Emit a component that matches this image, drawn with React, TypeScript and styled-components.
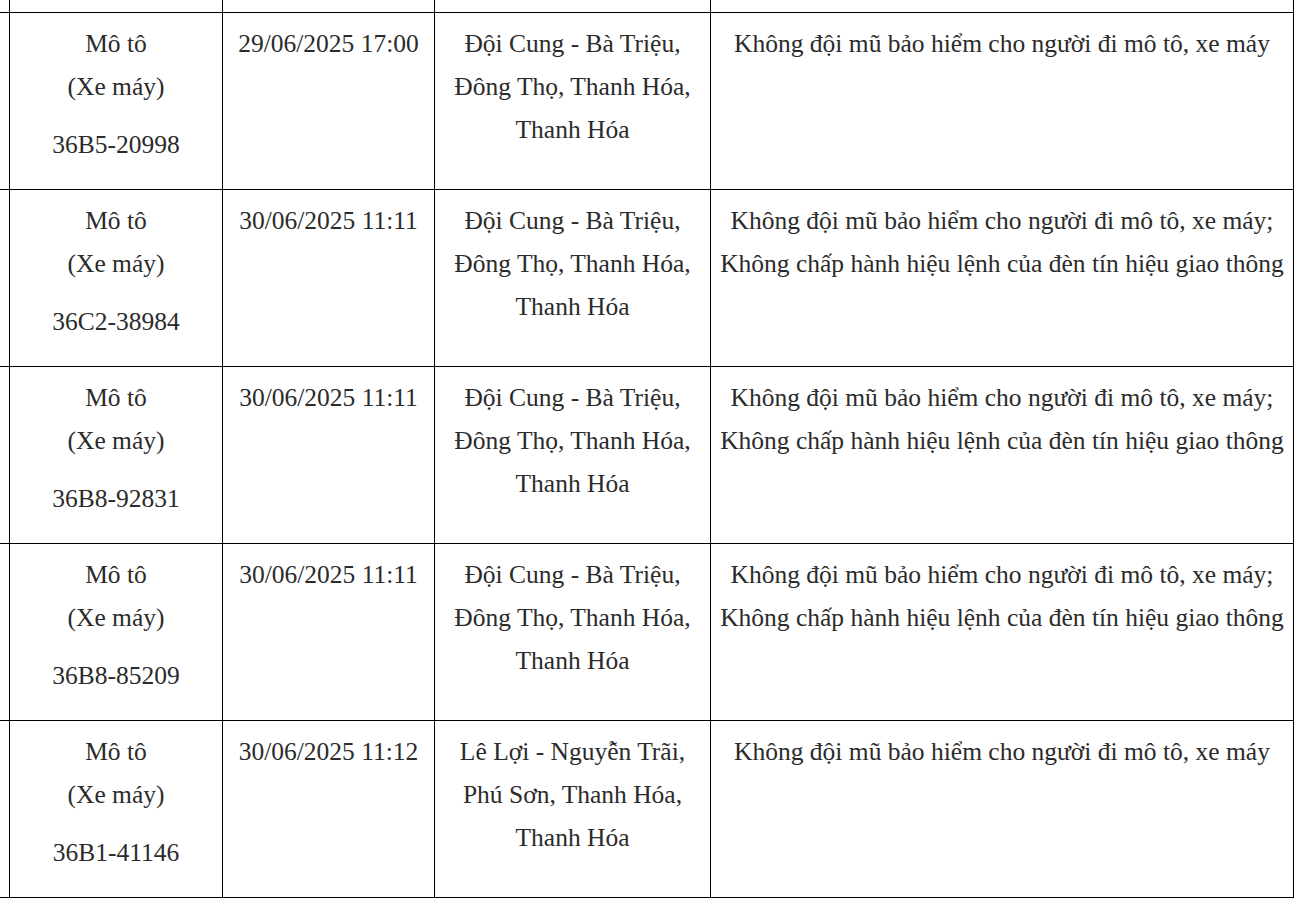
import { createGlobalStyle, styled } from "styled-components";

const GlobalStyle = createGlobalStyle`
  html, body {
    margin: 0;
    padding: 0;
    background: #fff;
    overflow: hidden;
  }
`;

type Violation = {
  vehicle: string;
  plate: string;
  time: string;
  place: string[];
  acts: string[];
};

const helmet = "Không đội mũ bảo hiểm cho người đi mô tô, xe máy";
const light = "Không chấp hành hiệu lệnh của đèn tín hiệu giao thông";
const doiCung = ["Đội Cung - Bà Triệu,", "Đông Thọ, Thanh Hóa,", "Thanh Hóa"];

const rows: Violation[] = [
  {
    vehicle: "Mô tô",
    plate: "36B5-20998",
    time: "29/06/2025 17:00",
    place: doiCung,
    acts: [helmet],
  },
  {
    vehicle: "Mô tô",
    plate: "36C2-38984",
    time: "30/06/2025 11:11",
    place: doiCung,
    acts: [helmet + ";", light],
  },
  {
    vehicle: "Mô tô",
    plate: "36B8-92831",
    time: "30/06/2025 11:11",
    place: doiCung,
    acts: [helmet + ";", light],
  },
  {
    vehicle: "Mô tô",
    plate: "36B8-85209",
    time: "30/06/2025 11:11",
    place: doiCung,
    acts: [helmet + ";", light],
  },
  {
    vehicle: "Mô tô",
    plate: "36B1-41146",
    time: "30/06/2025 11:12",
    place: ["Lê Lợi - Nguyễn Trãi,", "Phú Sơn, Thanh Hóa,", "Thanh Hóa"],
    acts: [helmet],
  },
];

const Lines = ({ lines }: { lines: string[] }) => (
  <>
    {lines.map((line, j) => (
      <span key={j}>
        {line}
        {j < lines.length - 1 && <br />}
      </span>
    ))}
  </>
);

const App = () => {
  return (
    <>
      <GlobalStyle />
      <Table>
        <colgroup>
          <col style={{ width: 60 }} />
          <col style={{ width: 213 }} />
          <col style={{ width: 212 }} />
          <col style={{ width: 276 }} />
          <col style={{ width: 583 }} />
        </colgroup>
        <tbody>
          {/* row scrolled above the view */}
          <PrevRow>
            <Cell />
            <Cell />
            <Cell />
            <Cell />
            <Cell />
          </PrevRow>
          {rows.map((r, i) => (
            <tr key={i}>
              <Cell />
              <Cell>
                <Para>
                  {r.vehicle}
                  <br />
                  (Xe máy)
                </Para>
                <Para>{r.plate}</Para>
              </Cell>
              <Cell>
                <Para>{r.time}</Para>
              </Cell>
              <Cell>
                <Para>
                  <Lines lines={r.place} />
                </Para>
              </Cell>
              <Cell>
                <Para $nowrap>
                  <Lines lines={r.acts} />
                </Para>
              </Cell>
            </tr>
          ))}
        </tbody>
      </Table>
    </>
  );
};

const Table = styled.table`
  border-collapse: collapse;
  table-layout: fixed;
  width: 1344px;
  margin: -165px 0 0 -51px;
  font-family: "Liberation Serif", "Times New Roman", serif;
  font-size: 25.5px;
  line-height: 43px;
  color: #2b2b2b;
`;

const PrevRow = styled.tr`
  height: 177px;
`;

const Cell = styled.td`
  border: 1px solid #000;
  padding: 9px 8px 8px;
  text-align: center;
  vertical-align: top;
`;

const Para = styled.p<{ $nowrap?: boolean }>`
  margin: 0 0 15px;
  white-space: ${(p) => (p.$nowrap ? "nowrap" : "normal")};
`;

export default App;
